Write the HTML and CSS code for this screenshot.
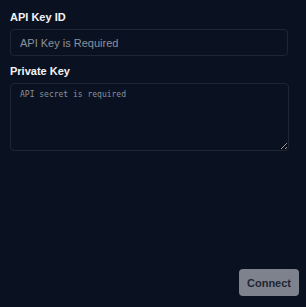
FILE: index.html
```
<!DOCTYPE html>
<html>
<head>
<meta charset="utf-8">
<link rel="stylesheet" href="styles.css">
</head>
<body>
<div class="page">
  <form class="form">
    <label class="label" for="key">API Key ID</label>
    <input class="input" id="key" type="text" placeholder="API Key is Required">
    <label class="label label-second" for="secret">Private Key</label>
    <textarea class="textarea" id="secret" placeholder="API secret is required"></textarea>
  </form>
  <div class="footer">
    <button class="button" type="button">Connect</button>
  </div>
</div>
</body>
</html>
```
FILE: styles.css
```
html, body {
  margin: 0;
  padding: 0;
  background: #0a1120;
}
.page {
  height: 307px;
  display: flex;
  flex-direction: column;
  font-family: "Liberation Sans", Arial, sans-serif;
}
.form {
  display: flex;
  flex-direction: column;
  padding: 10px 18px 0 10px;
}
.label {
  color: #f3f4f6;
  font-size: 11px;
  font-weight: bold;
  line-height: 14px;
  margin-bottom: 5px;
}
.label-second {
  margin-top: 8px;
  margin-bottom: 5px;
}
.input {
  box-sizing: border-box;
  height: 27px;
  width: 278px;
  background: transparent;
  border: 1px solid #1e2634;
  border-radius: 4px;
  padding: 0 9px;
  color: #e5e7eb;
  font-family: "Liberation Sans", Arial, sans-serif;
  font-size: 11px;
  outline: none;
}
.input::placeholder {
  color: #8b919c;
}
.textarea {
  box-sizing: border-box;
  height: 68px;
  width: 279px;
  background: transparent;
  border: 1px solid #1e2634;
  border-radius: 4px;
  padding: 6px 9px;
  color: #e5e7eb;
  font-family: "DejaVu Sans Mono", monospace;
  font-size: 8px;
  outline: none;
}
.textarea::placeholder {
  color: #8b919c;
}
.footer {
  margin-top: auto;
  display: flex;
  justify-content: flex-end;
  padding: 0 7px 11px 0;
}
.button {
  width: 60px;
  height: 27px;
  border: none;
  border-radius: 4px;
  background: #7d828d;
  color: #1f2633;
  font-family: "Liberation Sans", Arial, sans-serif;
  font-size: 11px;
  font-weight: bold;
}
```
